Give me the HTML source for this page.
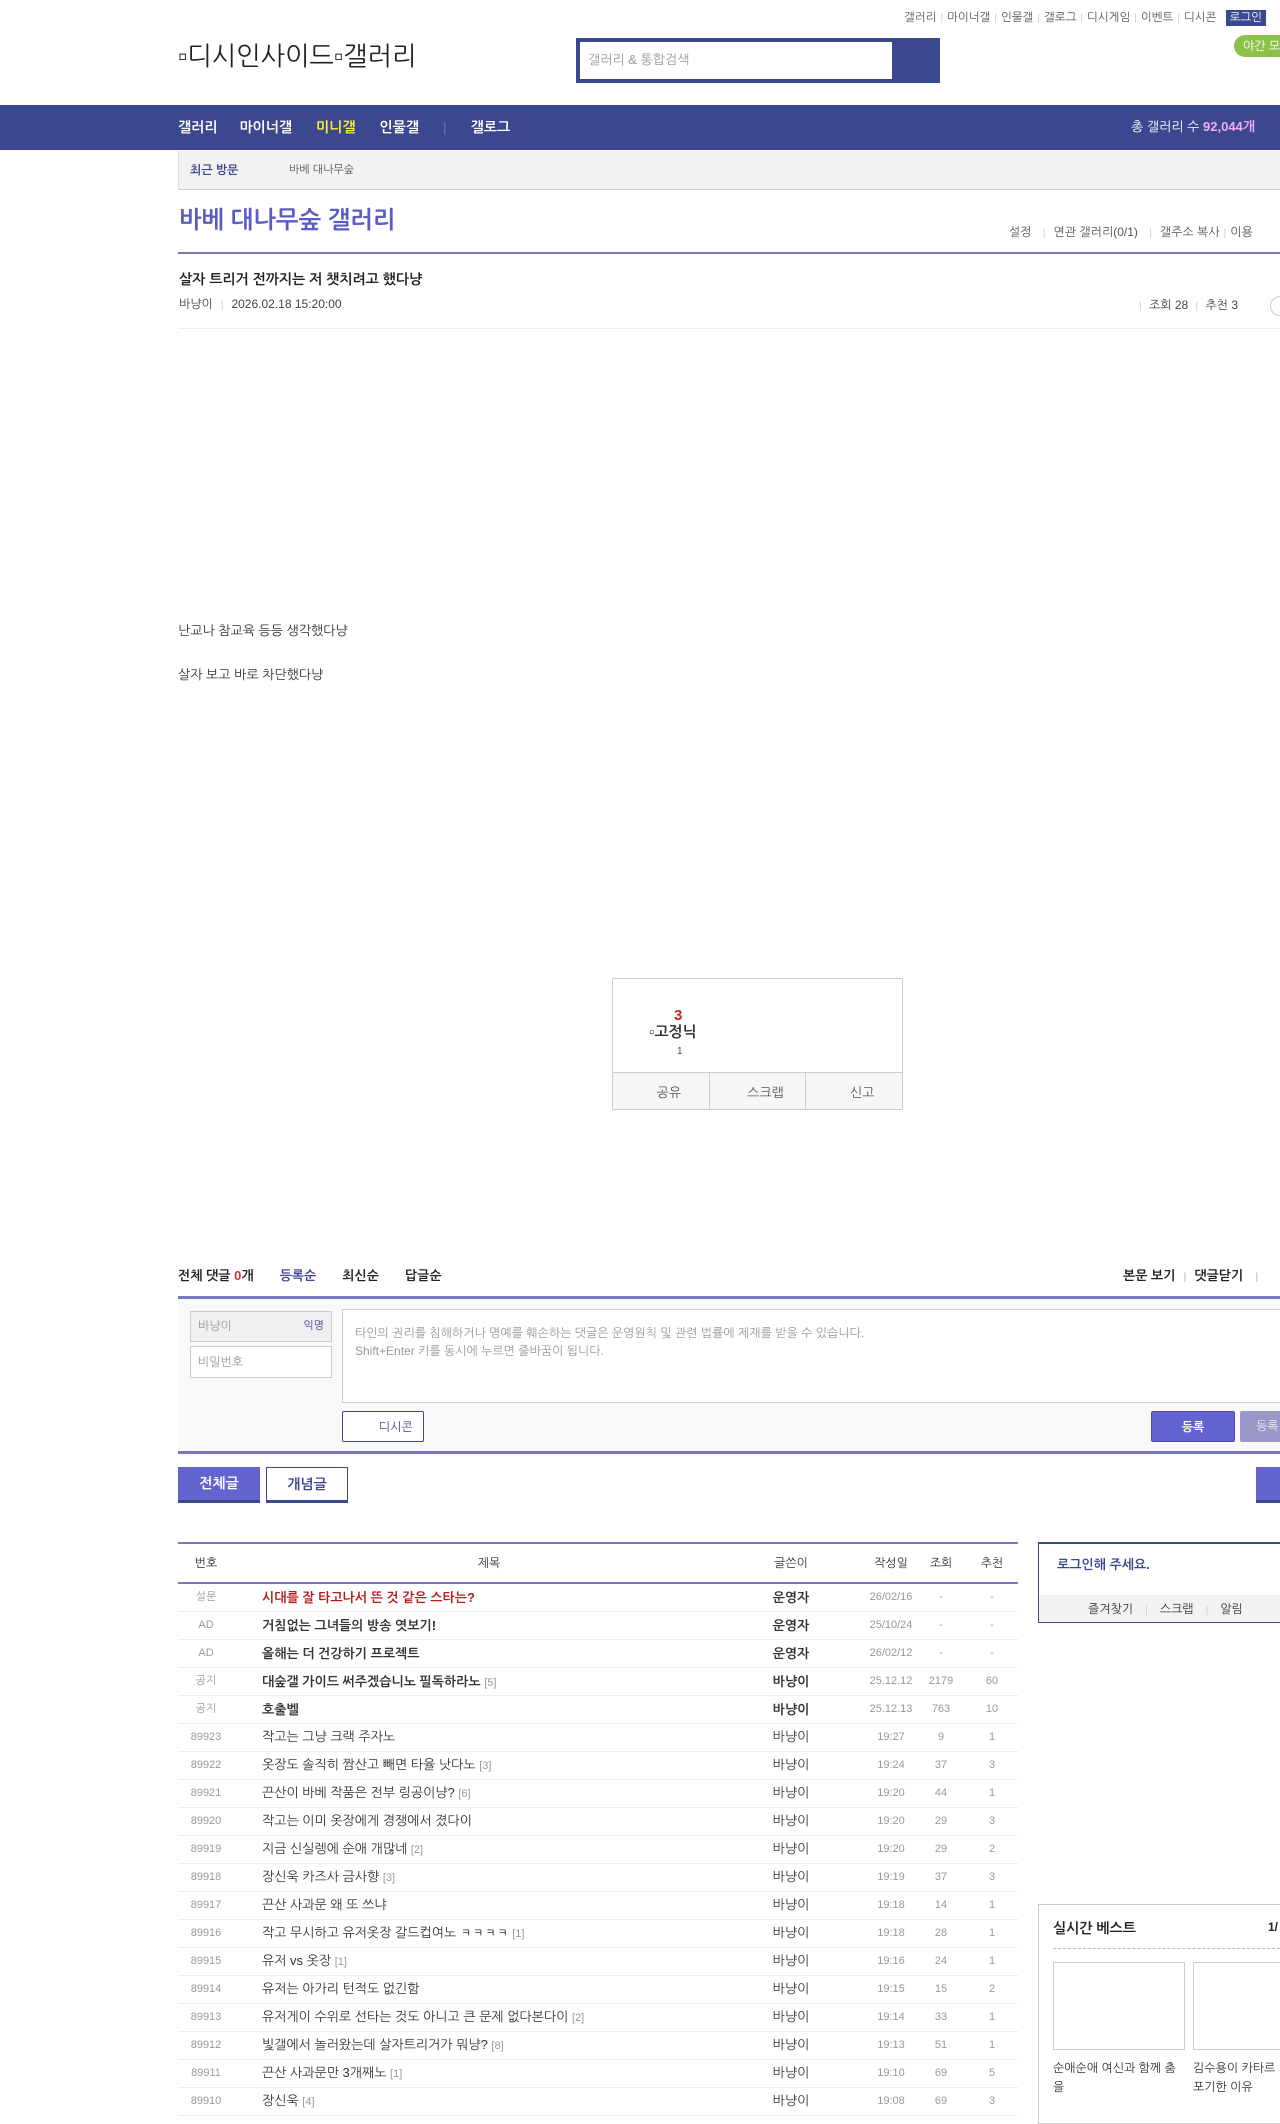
<!DOCTYPE html>
<html><head><meta charset="utf-8">
<style>
*{margin:0;padding:0;box-sizing:border-box}
body{width:1280px;height:2109px;overflow:hidden;background:#fff;font-family:"Liberation Sans","NanumGothic","Noto Sans CJK KR",sans-serif;color:#333;position:relative;font-size:13px}
.a{position:absolute;white-space:nowrap}
.sep{color:#ccc;margin:0 4px;font-size:10px}
table{border-collapse:collapse;width:840px;table-layout:fixed}
td,th{height:28px;font-size:12px;border-bottom:1px solid #eee;text-align:center;white-space:nowrap;overflow:hidden}
th{height:39px;font-weight:normal;border-bottom:2px solid #7b78c0;color:#333}
td.t{text-align:left;padding-left:28px;font-size:13px}
th.t{padding-left:0}
td.w{font-size:13px}
.b{font-weight:bold}
.c{color:#999;font-size:11px}
</style></head><body>
<div class="a" style="right:14px;top:10px;font-size:11.5px;color:#555">갤러리<span class="sep">|</span>마이너갤<span class="sep">|</span>인물갤<span class="sep">|</span>갤로그<span class="sep">|</span>디시게임<span class="sep">|</span>이벤트<span class="sep">|</span>디시콘 <span style="background:#3b4890;color:#fff;padding:2px 4px;margin-left:6px">로그인</span></div>
<div class="a" style="left:178px;top:40px;font-size:26px;color:#222">▫디시인사이드▫갤러리</div>
<div class="a" style="left:576px;top:38px;width:364px;height:45px;background:#3b4890;padding:4px"><div style="width:312px;height:37px;background:#fff;padding:10px 8px;color:#999;font-size:13px">갤러리 &amp; 통합검색</div></div>
<div class="a" style="left:1234px;top:35px;width:60px;height:22px;background:#8bc34a;border-radius:11px;color:#fff;font-size:12px;padding:4px 9px">야간 모드</div>
<div class="a" style="left:0;top:105px;width:1280px;height:45px;background:#3b4890"></div>
<div class="a" style="left:178px;top:119px;color:#fff;font-size:14px;font-weight:bold">갤러리 <span style="margin-left:18px">마이너갤</span><span style="margin-left:24px;color:#ffeb3b">미니갤</span><span style="margin-left:24px">인물갤</span><span style="margin-left:24px;color:#6b74b0;font-weight:normal">|</span><span style="margin-left:24px">갤로그</span></div>
<div class="a" style="right:25px;top:119px;color:#fff;font-size:13px">총 갤러리 수 <b style="color:#f4a9ff">92,044개</b></div>
<div class="a" style="left:178px;top:151px;width:1102px;height:39px;background:#f3f3f3;border-left:1px solid #ddd;border-bottom:1px solid #ccc"></div>
<div class="a" style="left:190px;top:163px;font-size:12px;color:#3b4890;font-weight:bold">최근 방문</div>
<div class="a" style="left:289px;top:163px;font-size:11px;color:#555">바베 대나무숲</div>
<div class="a" style="left:179px;top:207px;font-size:24px;color:#5b5bc4;font-weight:bold">바베 대나무숲 갤러리</div>
<div class="a" style="left:1009px;top:225px;font-size:12px;color:#555">설정 <span class="sep" style="margin:0 8px">|</span>연관 갤러리(0/1) <span class="sep" style="margin:0 8px">|</span>갤주소 복사<span class="sep">|</span>이용</div>
<div class="a" style="left:178px;top:252px;width:1102px;height:2px;background:#7b78c0"></div>
<div class="a" style="left:179px;top:271px;font-size:14px;font-weight:bold;color:#222">살자 트리거 전까지는 저 챗치려고 했다냥</div>
<div class="a" style="left:179px;top:297px;font-size:12px;color:#444">바냥이<span class="sep" style="margin:0 8px">|</span>2026.02.18 15:20:00</div>
<div class="a" style="left:1135px;top:298px;font-size:12px;color:#444"><span class="sep">|</span> 조회 28 <span class="sep">|</span> 추천 3</div>
<div class="a" style="left:1270px;top:296px;width:20px;height:20px;border:1px solid #ccc;border-radius:50%"></div>
<div class="a" style="left:178px;top:328px;width:1102px;height:1px;background:#eee"></div>
<div class="a" style="left:178px;top:623px;font-size:13px;color:#333">난교나 참교육 등등 생각했다냥</div>
<div class="a" style="left:178px;top:667px;font-size:13px;color:#333">살자 보고 바로 차단했다냥</div>
<div class="a" style="left:612px;top:978px;width:291px;height:132px;border:1px solid #ccc;border-radius:2px"></div>
<div class="a" style="left:674px;top:1007px;font-size:15px;font-weight:bold;color:#c62828">3</div>
<div class="a" style="left:649px;top:1024px;font-size:15px;font-weight:bold;color:#333">▫고정닉</div>
<div class="a" style="left:677px;top:1046px;font-size:10px;color:#3b4890">1</div>
<div class="a" style="left:613px;top:1072px;width:289px;height:37px;background:#f7f7f7;border-top:1px solid #ccc;display:flex;font-size:13px;color:#555">
<div style="flex:1;text-align:center;padding:12px 0 0 16px;border-right:1px solid #ccc">공유</div><div style="flex:1;text-align:center;padding:12px 0 0 16px;border-right:1px solid #ccc">스크랩</div><div style="flex:1;text-align:center;padding:12px 0 0 16px">신고</div></div>
<div class="a" style="left:178px;top:1268px;font-size:13px;font-weight:bold;color:#222">전체 댓글 <span style="color:#d32f2f">0</span>개<span style="margin-left:26px;color:#3b4890">등록순</span><span style="margin-left:26px">최신순</span><span style="margin-left:26px">답글순</span></div>
<div class="a" style="left:1123px;top:1268px;font-size:13px;font-weight:bold;color:#222">본문 보기<span class="sep" style="margin:0 8px">|</span>댓글닫기<span class="sep" style="margin-left:12px">|</span></div>
<div class="a" style="left:178px;top:1296px;width:1102px;height:3px;background:#7b78c0"></div>
<div class="a" style="left:178px;top:1299px;width:1102px;height:155px;background:#f9f9f9;border-bottom:3px solid #7b78c0"></div>
<div class="a" style="left:190px;top:1311px;width:142px;height:31px;background:#f0f0f0;border:1px solid #ccc;font-size:12px;color:#999;padding:7px 7px">바냥이<span style="float:right;color:#3b4890;font-size:11px">익명</span></div>
<div class="a" style="left:190px;top:1346px;width:142px;height:32px;background:#fff;border:1px solid #ccc;font-size:12px;color:#999;padding:8px 7px">비밀번호</div>
<div class="a" style="left:342px;top:1309px;width:950px;height:94px;background:#fff;border:1px solid #ccc;font-size:12px;color:#999;padding:14px 12px;line-height:18px;white-space:normal">타인의 권리를 침해하거나 명예를 훼손하는 댓글은 운영원칙 및 관련 법률에 제재를 받을 수 있습니다.<br>Shift+Enter 키를 동시에 누르면 줄바꿈이 됩니다.</div>
<div class="a" style="left:342px;top:1411px;width:82px;height:31px;background:#fff;border:1px solid #3b4890;border-radius:2px;font-size:12px;color:#3b4890;padding:8px 0 0 36px">디시콘</div>
<div class="a" style="left:1151px;top:1411px;width:84px;height:31px;background:#6464d0;border:1px solid #4a4ab0;border-radius:2px;font-size:12px;color:#fff;text-align:center;padding-top:8px;font-weight:bold">등록</div>
<div class="a" style="left:1240px;top:1411px;width:60px;height:31px;background:#9a98c8;border-radius:2px;font-size:12px;color:#eee;padding:8px 0 0 16px">등록</div>
<div class="a" style="left:178px;top:1467px;width:82px;height:36px;background:#6464d0;border-bottom:3px solid #3b4890;color:#fff;font-size:14px;font-weight:bold;text-align:center;padding-top:8px">전체글</div>
<div class="a" style="left:266px;top:1467px;width:82px;height:36px;background:#fff;border:1px solid #3b4890;border-bottom:3px solid #3b4890;color:#3b4890;font-size:14px;font-weight:bold;text-align:center;padding-top:8px">개념글</div>
<div class="a" style="left:1256px;top:1467px;width:40px;height:36px;background:#6464d0;border-bottom:3px solid #3b4890"></div>
<div class="a" style="left:178px;top:1542px;width:840px;border-top:2px solid #7b78c0">
<table>
<colgroup><col style="width:56px"><col style="width:510px"><col style="width:94px"><col style="width:28px"><col style="width:50px"><col style="width:50px"><col style="width:52px"></colgroup>
<tr><th>번호</th><th>제목</th><th>글쓴이</th><th></th><th>작성일</th><th>조회</th><th>추천</th></tr>
<tr><td class="c">설문</td><td class="t b" style="color:#b71c1c">시대를 잘 타고나서 뜬 것 같은 스타는?</td><td class="w b">운영자</td><td></td><td class="c">26/02/16</td><td class="c">-</td><td class="c">-</td></tr>
<tr><td class="c">AD</td><td class="t b">거침없는 그녀들의 방송 엿보기!</td><td class="w b">운영자</td><td></td><td class="c">25/10/24</td><td class="c">-</td><td class="c">-</td></tr>
<tr><td class="c">AD</td><td class="t b">올해는 더 건강하기 프로젝트</td><td class="w b">운영자</td><td></td><td class="c">26/02/12</td><td class="c">-</td><td class="c">-</td></tr>
<tr><td class="c">공지</td><td class="t b">대숲갤 가이드 써주겠습니노 필독하라노 <span class="c" style="font-weight:normal">[5]</span></td><td class="w b">바냥이</td><td></td><td class="c">25.12.12</td><td class="c">2179</td><td class="c">60</td></tr>
<tr><td class="c">공지</td><td class="t b">호출벨</td><td class="w b">바냥이</td><td></td><td class="c">25.12.13</td><td class="c">763</td><td class="c">10</td></tr>
<tr><td class="c">89923</td><td class="t">작고는 그냥 크랙 주자노</td><td class="w">바냥이</td><td></td><td class="c">19:27</td><td class="c">9</td><td class="c">1</td></tr>
<tr><td class="c">89922</td><td class="t">옷장도 솔직히 짬산고 빼면 타율 낫다노 <span class="c">[3]</span></td><td class="w">바냥이</td><td></td><td class="c">19:24</td><td class="c">37</td><td class="c">3</td></tr>
<tr><td class="c">89921</td><td class="t">끈산이 바베 작품은 전부 링공이냥? <span class="c">[6]</span></td><td class="w">바냥이</td><td></td><td class="c">19:20</td><td class="c">44</td><td class="c">1</td></tr>
<tr><td class="c">89920</td><td class="t">작고는 이미 옷장에게 경쟁에서 졌다이</td><td class="w">바냥이</td><td></td><td class="c">19:20</td><td class="c">29</td><td class="c">3</td></tr>
<tr><td class="c">89919</td><td class="t">지금 신실렝에 순애 개많네 <span class="c">[2]</span></td><td class="w">바냥이</td><td></td><td class="c">19:20</td><td class="c">29</td><td class="c">2</td></tr>
<tr><td class="c">89918</td><td class="t">장신욱 카즈사 금사향 <span class="c">[3]</span></td><td class="w">바냥이</td><td></td><td class="c">19:19</td><td class="c">37</td><td class="c">3</td></tr>
<tr><td class="c">89917</td><td class="t">끈산 사과문 왜 또 쓰냐</td><td class="w">바냥이</td><td></td><td class="c">19:18</td><td class="c">14</td><td class="c">1</td></tr>
<tr><td class="c">89916</td><td class="t">작고 무시하고 유저옷장 갈드컵여노 ㅋㅋㅋㅋ <span class="c">[1]</span></td><td class="w">바냥이</td><td></td><td class="c">19:18</td><td class="c">28</td><td class="c">1</td></tr>
<tr><td class="c">89915</td><td class="t">유저 vs 옷장 <span class="c">[1]</span></td><td class="w">바냥이</td><td></td><td class="c">19:16</td><td class="c">24</td><td class="c">1</td></tr>
<tr><td class="c">89914</td><td class="t">유저는 아가리 턴적도 없긴함</td><td class="w">바냥이</td><td></td><td class="c">19:15</td><td class="c">15</td><td class="c">2</td></tr>
<tr><td class="c">89913</td><td class="t">유저게이 수위로 선타는 것도 아니고 큰 문제 없다본다이 <span class="c">[2]</span></td><td class="w">바냥이</td><td></td><td class="c">19:14</td><td class="c">33</td><td class="c">1</td></tr>
<tr><td class="c">89912</td><td class="t">빛갤에서 놀러왔는데 살자트리거가 뭐냥? <span class="c">[8]</span></td><td class="w">바냥이</td><td></td><td class="c">19:13</td><td class="c">51</td><td class="c">1</td></tr>
<tr><td class="c">89911</td><td class="t">끈산 사과문만 3개째노 <span class="c">[1]</span></td><td class="w">바냥이</td><td></td><td class="c">19:10</td><td class="c">69</td><td class="c">5</td></tr>
<tr><td class="c">89910</td><td class="t">장신욱 <span class="c">[4]</span></td><td class="w">바냥이</td><td></td><td class="c">19:08</td><td class="c">69</td><td class="c">3</td></tr>
</table></div>
<div class="a" style="left:1038px;top:1542px;width:260px;height:81px;border:1px solid #3b4890;border-top:2px solid #3b4890"></div>
<div class="a" style="left:1057px;top:1557px;font-size:13px;font-weight:bold;color:#3b4890">로그인해 주세요.</div>
<div class="a" style="left:1039px;top:1595px;width:241px;height:27px;background:#f3f3f3;font-size:12px;color:#333;padding:7px 0 0 49px">즐겨찾기<span class="sep" style="margin:0 12px">|</span>스크랩<span class="sep" style="margin:0 12px">|</span>알림</div>
<div class="a" style="left:1038px;top:1904px;width:260px;height:220px;border:1px solid #ccc"></div>
<div class="a" style="left:1053px;top:1920px;font-size:14px;font-weight:bold;color:#222">실시간 베스트</div>
<div class="a" style="left:1268px;top:1920px;font-size:12px;font-weight:bold;color:#222">1/</div>
<div class="a" style="left:1053px;top:1948px;width:227px;border-top:1px dashed #bbb"></div>
<div class="a" style="left:1053px;top:1962px;width:132px;height:88px;border:1px solid #ccc"></div>
<div class="a" style="left:1193px;top:1962px;width:100px;height:88px;border:1px solid #ccc"></div>
<div class="a" style="left:1053px;top:2059px;font-size:12px;color:#333;line-height:19px">순애순애 여신과 함께 춤<br>을</div>
<div class="a" style="left:1193px;top:2059px;font-size:12px;color:#333;line-height:19px">김수용이 카타르<br>포기한 이유</div>
</body></html>
